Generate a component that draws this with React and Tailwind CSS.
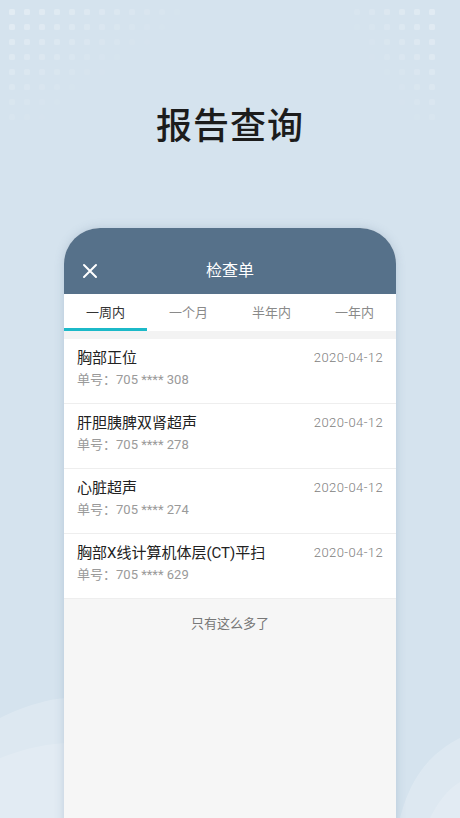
import React from "react";

const font = { fontFamily: 'Roboto, "Noto Sans CJK SC", "Noto Sans", sans-serif' };

function Dots({ side }) {
  const dots = [];
  const cols = side === "left" ? 12 : 6;
  for (let r = 0; r < 8; r++) {
    for (let c = 0; c < cols; c++) {
      let o;
      if (side === "left") {
        o = Math.max(0, 0.32 - c * 0.025 - r * 0.035);
      } else {
        o = Math.max(0, 0.3 - (cols - 1 - c) * 0.045 - r * 0.03);
      }
      if (o <= 0.02) continue;
      dots.push(
        <rect key={r + "-" + c} x={c * 15 + 2} y={r * 15 + 2} width="6" height="6" rx="1.5" fill="#ffffff" opacity={o} />
      );
    }
  }
  return (
    <svg width={cols * 15 + 4} height="124" className="block">
      {dots}
    </svg>
  );
}

const items = [
  { title: "胸部正位", no: "705 **** 308" },
  { title: "肝胆胰脾双肾超声", no: "705 **** 278" },
  { title: "心脏超声", no: "705 **** 274" },
  { title: "胸部X线计算机体层(CT)平扫", no: "705 **** 629" },
];

export default function App() {
  return (
    <div className="relative w-[460px] h-[818px] overflow-hidden bg-[#d5e3ee]" style={font}>
      <div className="absolute left-[7px] top-[7px]"><Dots side="left" /></div>
      <div className="absolute left-[352px] top-[7px]"><Dots side="right" /></div>
      <svg className="absolute left-0 bottom-0" width="460" height="140" viewBox="0 0 460 140">
        <path d="M0 40 C 30 25, 55 20, 70 20 L 70 140 L 0 140 Z" fill="#ffffff" opacity="0.2" />
        <path d="M0 80 C 25 70, 50 65, 70 65 L 70 140 L 0 140 Z" fill="#ffffff" opacity="0.15" />
        <path d="M400 140 C 410 100, 430 75, 460 60 L 460 140 Z" fill="#ffffff" opacity="0.2" />
        <path d="M430 140 C 440 120, 450 110, 460 104 L 460 140 Z" fill="#ffffff" opacity="0.15" />
      </svg>

      <div className="relative flex flex-col items-center">
        <h1 className="mt-[101px] text-[36px] leading-[52px] font-medium text-[#1c1c1c] tracking-[1px]">报告查询</h1>

        <div className="mt-[75px] w-[332px] h-[600px] rounded-t-[36px] overflow-hidden bg-[#f6f6f6] shadow-[0_0_10px_rgba(90,120,150,0.25)] flex flex-col">
          <div className="h-[66px] bg-[#56718a] relative flex items-end justify-center pb-[12px]">
            <svg className="absolute left-[18px] bottom-[15px]" width="16" height="16" viewBox="0 0 16 16">
              <path d="M2 2 L14 14 M14 2 L2 14" stroke="#ffffff" strokeWidth="2" strokeLinecap="round" />
            </svg>
            <span className="text-white text-[16px] leading-[22px]">检查单</span>
          </div>
          <div className="h-[37px] bg-white grid grid-cols-4">
            {["一周内", "一个月", "半年内", "一年内"].map((t, i) => (
              <div key={t} className="relative flex items-center justify-center">
                <span className={"text-[13px] leading-[18px] " + (i === 0 ? "text-[#333333]" : "text-[#8a8a8a]")}>{t}</span>
                {i === 0 && <div className="absolute left-0 right-0 bottom-0 h-[3px] bg-[#1cb9c8]" />}
              </div>
            ))}
          </div>
          <div className="h-[8px] bg-[#f3f3f3]" />
          <div className="bg-white">
            {items.map((it, i) => (
              <div key={i} className="h-[65px] border-b border-[#eeeeee] px-[13px] pt-[8px] flex justify-between">
                <div className="flex flex-col">
                  <span className="text-[15px] leading-[22px] text-[#222222]">{it.title}</span>
                  <span className="mt-[1px] text-[13px] leading-[20px] text-[#9a9a9a]">单号：{it.no}</span>
                </div>
                <span className="text-[13px] leading-[22px] tracking-[0.4px] font-light text-[#808080]">2020-04-12</span>
              </div>
            ))}
          </div>
          <div className="pt-[15px] text-center text-[13px] leading-[20px] text-[#777777]">只有这么多了</div>
        </div>
      </div>
    </div>
  );
}
